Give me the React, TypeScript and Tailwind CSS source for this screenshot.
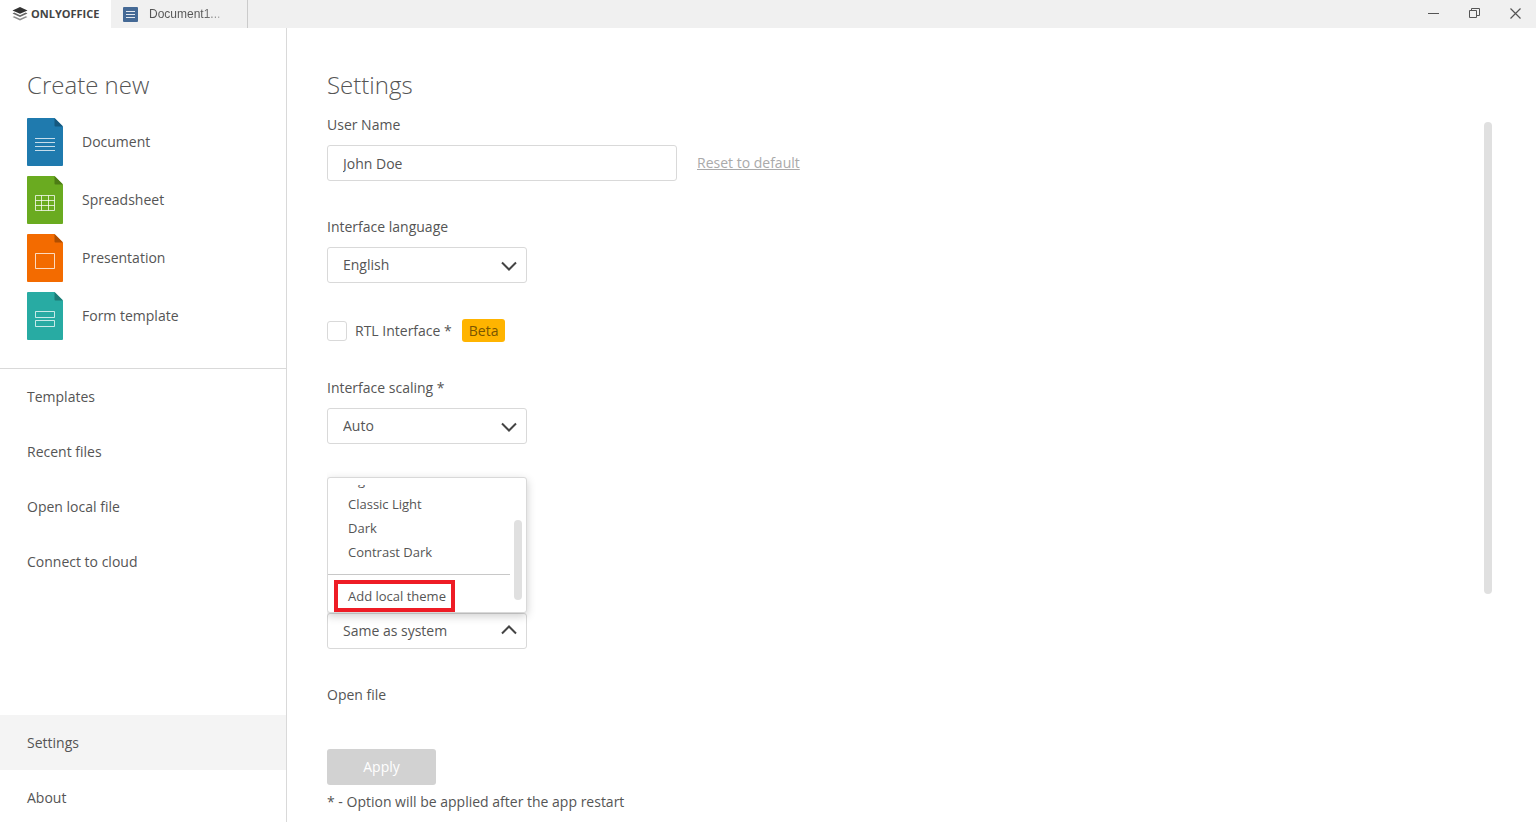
import { useState } from 'react';
import type { ReactNode } from 'react';

const createItems = [
  {
    label: 'Document',
    color: '#1f7aae',
    fold: '#15587f',
    glyph: <path d="M8 20.5h20M8 24.5h20M8 28.5h20M8 32.5h20" />,
  },
  {
    label: 'Spreadsheet',
    color: '#6aab20',
    fold: '#4c7c15',
    glyph: <path d="M8.5 19.5h19v15h-19zM8.5 24.5h19M8.5 29.5h19M14.5 19.5v15M21.5 19.5v15" />,
  },
  {
    label: 'Presentation',
    color: '#f36b00',
    fold: '#b04e00',
    glyph: <path d="M8.5 19.5h19v15h-19z" />,
  },
  {
    label: 'Form template',
    color: '#28aba3',
    fold: '#1c7c76',
    glyph: <path d="M8.5 19.5h19v6h-19zM8.5 28.5h19v6h-19z" />,
  },
];

const navItems = ['Templates', 'Recent files', 'Open local file', 'Connect to cloud'];

const themes = ['Light', 'Classic Light', 'Dark', 'Contrast Dark'];

function FileIcon({ color, fold, children }: { color: string; fold: string; children: ReactNode }) {
  return (
    <svg width="36" height="48" viewBox="0 0 36 48" fill="none" aria-hidden="true">
      <path d="M1 0h26.500L36 8.500V47a1 1 0 0 1-1 1H1a1 1 0 0 1-1-1V1a1 1 0 0 1 1-1z" fill={color} />
      <path d="M27.500 0L36 8.500h-7.500a1 1 0 0 1-1-1z" fill={fold} />
      <g stroke="#fff" strokeOpacity="0.75">{children}</g>
    </svg>
  );
}

function Chevron({ up = false }: { up?: boolean }) {
  return (
    <svg
      className="pointer-events-none absolute right-2.5 top-3"
      width="16"
      height="12"
      viewBox="0 0 16 12"
      fill="none"
      stroke="#444"
      strokeWidth="2"
      aria-hidden="true"
    >
      <path d={up ? 'M1 8.500L8 1.500l7 7' : 'M1 3.500l7 7 7-7'} />
    </svg>
  );
}

function Select({ id, value, label, open }: { id: string; value: string; label?: string; open?: boolean }) {
  return (
    <div className="relative w-50">
      <select
        id={id}
        aria-label={label}
        className="block h-9 w-full appearance-none rounded-[3px] border border-[#d9d9d9] bg-white px-[15px] outline-none"
      >
        <option>{value}</option>
      </select>
      <Chevron up={open} />
      {open && <ThemeMenu />}
    </div>
  );
}

function ThemeMenu() {
  return (
    <div className="absolute bottom-full left-0 h-34 w-full rounded-[3px] border border-[#d9d9d9] bg-white pt-[7px] text-[13px] leading-6 shadow-[0_3px_10px_rgba(0,0,0,0.2)]">
      <div className="flex h-full flex-col justify-end overflow-hidden pb-1">
        {themes.map((theme) => (
          <button key={theme} type="button" className="h-6 shrink-0 px-5 text-left">
            {theme}
          </button>
        ))}
        <hr className="mr-4 mt-2.5 mb-[9px] shrink-0 border-[#c8c8c8]" />
        <button type="button" className="h-6 shrink-0 px-5 text-left">
          Add local theme
        </button>
      </div>
      <div className="absolute bottom-3 right-1 h-20 w-2 rounded-full bg-[#e0e0e0]" />
      <div className="pointer-events-none absolute bottom-0 left-1.5 h-8 w-[121px] border-4 border-[#ee1c25]" />
    </div>
  );
}

function Field({ id, label, children }: { id: string; label: string; children: ReactNode }) {
  return (
    <div className="flex flex-col gap-2.5">
      <label htmlFor={id}>{label}</label>
      {children}
    </div>
  );
}

function TitleBar() {
  return (
    <header className="flex h-7 shrink-0 bg-[#f0f0f0]">
      <button type="button" className="flex w-[111px] items-center gap-[3px] bg-white pl-3 text-[11px] font-bold text-[#444]">
        <svg width="16" height="14" viewBox="0 0 16 14" aria-hidden="true">
          <path d="M8 0l7.500 3.400L8 6.800.5 3.400z" fill="#333" />
          <path d="M.5 6.400l1.800-.8L8 8.200l5.700-2.600 1.800.8L8 9.900z" fill="#666" />
          <path d="M.5 10l1.800-.8L8 11.800l5.700-2.600 1.800.8L8 13.500z" fill="#8c8c8c" />
        </svg>
        ONLYOFFICE
      </button>
      <button type="button" className="flex w-[137px] items-center gap-[11px] border-r border-[#cbcbcb] pl-3 font-['Liberation_Sans',sans-serif] text-xs">
        <svg width="15" height="15" viewBox="0 0 15 15" aria-hidden="true">
          <rect width="15" height="15" rx="1" fill="#446995" />
          <path d="M3 4.500h9M3 7.500h9M3 10.500h9" stroke="#fff" strokeOpacity="0.85" />
        </svg>
        <span className="bg-linear-to-r from-[#555] from-75% to-[#aaa] bg-clip-text text-transparent">Document1...</span>
      </button>
      <div className="ml-auto flex">
        <button type="button" aria-label="Minimize" className="flex w-[41px] items-center justify-center">
          <svg width="11" height="12" fill="none" stroke="#555">
            <path d="M0 5.500h11" />
          </svg>
        </button>
        <button type="button" aria-label="Restore" className="flex w-[41px] items-center justify-center">
          <svg width="11" height="12" fill="none" stroke="#555">
            <path d="M.5 2.500h7v7h-7zM2.500 2.500v-2h8v7h-3" />
          </svg>
        </button>
        <button type="button" aria-label="Close" className="flex w-[41px] items-center justify-center">
          <svg width="11" height="12" fill="none" stroke="#555" strokeWidth="1.200">
            <path d="M.5.5l10 10M10.500.5l-10 10" />
          </svg>
        </button>
      </div>
    </header>
  );
}

function Sidebar() {
  return (
    <aside className="flex w-[287px] shrink-0 flex-col overflow-hidden border-r border-[#d9d9d9]">
      <div className="border-b border-[#d9d9d9] px-[27px] pb-7 pt-[41px]">
        <h2 className="text-2xl font-light">Create new</h2>
        <div className="mt-[17px] flex flex-col gap-2.5">
          {createItems.map((item) => (
            <button key={item.label} type="button" className="flex items-center gap-[19px] text-left">
              <FileIcon color={item.color} fold={item.fold}>
                {item.glyph}
              </FileIcon>
              {item.label}
            </button>
          ))}
        </div>
      </div>
      <nav className="flex flex-1 flex-col">
        {navItems.map((item) => (
          <a key={item} href="#" className="flex h-[55px] shrink-0 items-center px-[27px]">
            {item}
          </a>
        ))}
        <div className="-mb-[3px] mt-auto">
          <a href="#" className="flex h-[55px] items-center bg-[#f4f4f4] px-[27px]">
            Settings
          </a>
          <a href="#" className="flex h-[55px] items-center px-[27px]">
            About
          </a>
        </div>
      </nav>
    </aside>
  );
}

export default function App() {
  const [name, setName] = useState('John Doe');
  const [rtl, setRtl] = useState(false);

  return (
    <div className="flex h-screen flex-col overflow-hidden bg-white font-['Open_Sans',sans-serif] text-sm leading-5 text-[#555]">
      <TitleBar />
      <div className="flex min-h-0 flex-1">
        <Sidebar />
        <main className="flex min-w-0 flex-1 flex-col pb-2.5 pl-10 pr-11 pt-[41px]">
          <h1 className="text-2xl font-light">Settings</h1>

          <div className="mt-3.5 flex min-h-0 flex-1 justify-between overflow-hidden">
            <div className="flex flex-col gap-9">
              <Field id="user-name" label="User Name">
                <div className="flex items-center gap-5">
                  <input
                    id="user-name"
                    type="text"
                    value={name}
                    onChange={(e) => setName(e.target.value)}
                    className="h-9 w-[350px] rounded-[3px] border border-[#d9d9d9] px-[15px] outline-none"
                  />
                  <a href="#" className="text-[#aaa] underline">
                    Reset to default
                  </a>
                </div>
              </Field>

              <Field id="language" label="Interface language">
                <Select id="language" value="English" />
              </Field>

              <div className="flex h-[23px] items-center">
                <input
                  id="rtl"
                  type="checkbox"
                  checked={rtl}
                  onChange={(e) => setRtl(e.target.checked)}
                  className="size-5 appearance-none rounded-[3px] border border-[#d9d9d9] checked:bg-[#555]"
                />
                <label htmlFor="rtl" className="ml-2">
                  RTL Interface *
                </label>
                <span className="ml-2.5 rounded-[3px] bg-[#ffb400] px-[7px] leading-[23px] text-[#7a5600]">Beta</span>
              </div>

              <Field id="scaling" label="Interface scaling *">
                <Select id="scaling" value="Auto" />
              </Field>

              <div className="pt-[133px]">
                <Select id="theme" label="Interface theme" value="Same as system" open />
              </div>

              <p>Open file</p>
            </div>
            <div className="mt-[7px] h-[472px] w-2 rounded-full bg-[#e0e0e0]" />
          </div>

          <button
            type="button"
            disabled
            className="mt-3.5 h-9 w-[109px] shrink-0 rounded-[3px] bg-[#d2d2d2] text-white"
          >
            Apply
          </button>
          <p className="mt-[7px]">* - Option will be applied after the app restart</p>
        </main>
      </div>
    </div>
  );
}
